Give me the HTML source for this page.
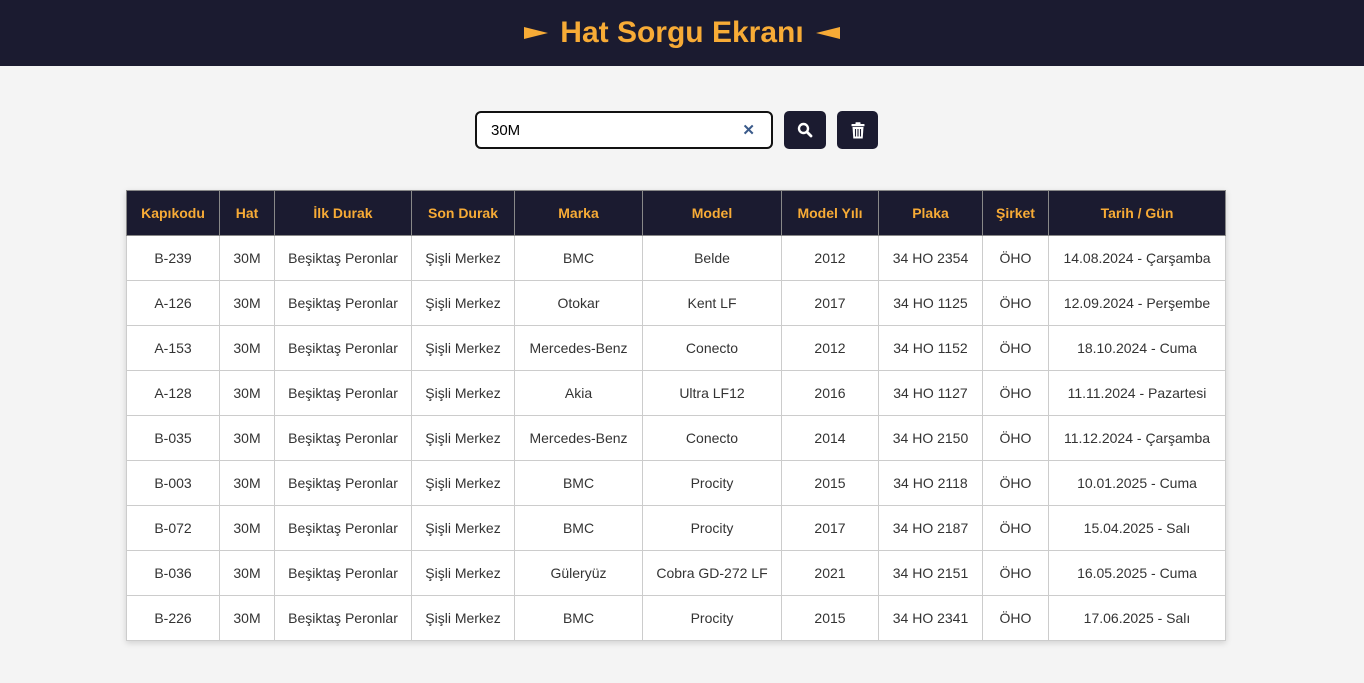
<!DOCTYPE html>
<html><head><meta charset="utf-8"><style>
body{margin:0;background:#f4f4f4;font-family:"Liberation Sans",sans-serif;width:1364px;height:683px;overflow:hidden}
.hdr{height:66px;background:#1b1b30;color:#f7ab36;font-weight:bold;font-size:30px;display:flex;align-items:center;justify-content:center;gap:12px}
.bar{position:absolute;top:111px;left:475px;display:flex}
.inp{width:294px;height:34px;border:2px solid #111;border-radius:6px;background:#fff;position:relative;font-size:15px;line-height:36px}
.inp span{position:absolute;left:14px}
.inp b{position:absolute;right:16px;color:#3a5a8a;font-size:15px}
.btn{width:42px;height:38px;background:#1b1b30;border-radius:5px;margin-left:11px;display:flex;align-items:center;justify-content:center}
table{position:absolute;left:126px;top:190px;border-collapse:collapse;box-shadow:0 2px 6px rgba(0,0,0,.15);font-size:14px;table-layout:fixed}
th{background:#1b1b30;color:#f7ab36;height:44px;border:1px solid #888;font-size:14px;padding:0}
td{background:#fff;height:44px;border:1px solid #ccc;text-align:center;color:#333;padding:0;white-space:nowrap}
</style></head><body>
<div class="hdr"><svg width="24" height="12" viewBox="0 0 24 12"><path d="M0 0L24 6L0 12z" fill="#f7ab36"/></svg><span>Hat Sorgu Ekranı</span><svg width="24" height="12" viewBox="0 0 24 12"><path d="M24 0L0 6L24 12z" fill="#f7ab36"/></svg></div>
<div class="bar"><div class="inp"><span>30M</span><b>✕</b></div>
<div class="btn"><svg width="16" height="16" viewBox="0 0 16 16"><circle cx="6.5" cy="6.5" r="4.5" stroke="#fff" stroke-width="2.4" fill="none"/><path d="M10 10l4 4" stroke="#fff" stroke-width="2.8" stroke-linecap="round"/></svg></div>
<div class="btn" style="width:41px"><svg width="14" height="17" viewBox="0 0 14 17"><rect x="0.5" y="2" width="13" height="2.2" rx="0.5" fill="#fff"/><rect x="4.5" y="0.3" width="5" height="2.2" rx="0.5" fill="#fff"/><path d="M1.5 5h11l-0.8 11.5H2.3z" fill="#fff"/><path d="M4.5 7v7.5M7 7v7.5M9.5 7v7.5" stroke="#1b1b30" stroke-width="1.1"/></svg></div></div>
<table>
<colgroup><col style="width:93px"><col style="width:55px"><col style="width:137px"><col style="width:103px"><col style="width:128px"><col style="width:139px"><col style="width:97px"><col style="width:104px"><col style="width:66px"><col style="width:177px"></colgroup>
<tr><th>Kapıkodu</th><th>Hat</th><th>İlk Durak</th><th>Son Durak</th><th>Marka</th><th>Model</th><th>Model Yılı</th><th>Plaka</th><th>Şirket</th><th>Tarih / Gün</th></tr>
<tr><td>B-239</td><td>30M</td><td>Beşiktaş Peronlar</td><td>Şişli Merkez</td><td>BMC</td><td>Belde</td><td>2012</td><td>34 HO 2354</td><td>ÖHO</td><td>14.08.2024 - Çarşamba</td></tr>
<tr><td>A-126</td><td>30M</td><td>Beşiktaş Peronlar</td><td>Şişli Merkez</td><td>Otokar</td><td>Kent LF</td><td>2017</td><td>34 HO 1125</td><td>ÖHO</td><td>12.09.2024 - Perşembe</td></tr>
<tr><td>A-153</td><td>30M</td><td>Beşiktaş Peronlar</td><td>Şişli Merkez</td><td>Mercedes-Benz</td><td>Conecto</td><td>2012</td><td>34 HO 1152</td><td>ÖHO</td><td>18.10.2024 - Cuma</td></tr>
<tr><td>A-128</td><td>30M</td><td>Beşiktaş Peronlar</td><td>Şişli Merkez</td><td>Akia</td><td>Ultra LF12</td><td>2016</td><td>34 HO 1127</td><td>ÖHO</td><td>11.11.2024 - Pazartesi</td></tr>
<tr><td>B-035</td><td>30M</td><td>Beşiktaş Peronlar</td><td>Şişli Merkez</td><td>Mercedes-Benz</td><td>Conecto</td><td>2014</td><td>34 HO 2150</td><td>ÖHO</td><td>11.12.2024 - Çarşamba</td></tr>
<tr><td>B-003</td><td>30M</td><td>Beşiktaş Peronlar</td><td>Şişli Merkez</td><td>BMC</td><td>Procity</td><td>2015</td><td>34 HO 2118</td><td>ÖHO</td><td>10.01.2025 - Cuma</td></tr>
<tr><td>B-072</td><td>30M</td><td>Beşiktaş Peronlar</td><td>Şişli Merkez</td><td>BMC</td><td>Procity</td><td>2017</td><td>34 HO 2187</td><td>ÖHO</td><td>15.04.2025 - Salı</td></tr>
<tr><td>B-036</td><td>30M</td><td>Beşiktaş Peronlar</td><td>Şişli Merkez</td><td>Güleryüz</td><td>Cobra GD-272 LF</td><td>2021</td><td>34 HO 2151</td><td>ÖHO</td><td>16.05.2025 - Cuma</td></tr>
<tr><td>B-226</td><td>30M</td><td>Beşiktaş Peronlar</td><td>Şişli Merkez</td><td>BMC</td><td>Procity</td><td>2015</td><td>34 HO 2341</td><td>ÖHO</td><td>17.06.2025 - Salı</td></tr>
</table>
</body></html>
